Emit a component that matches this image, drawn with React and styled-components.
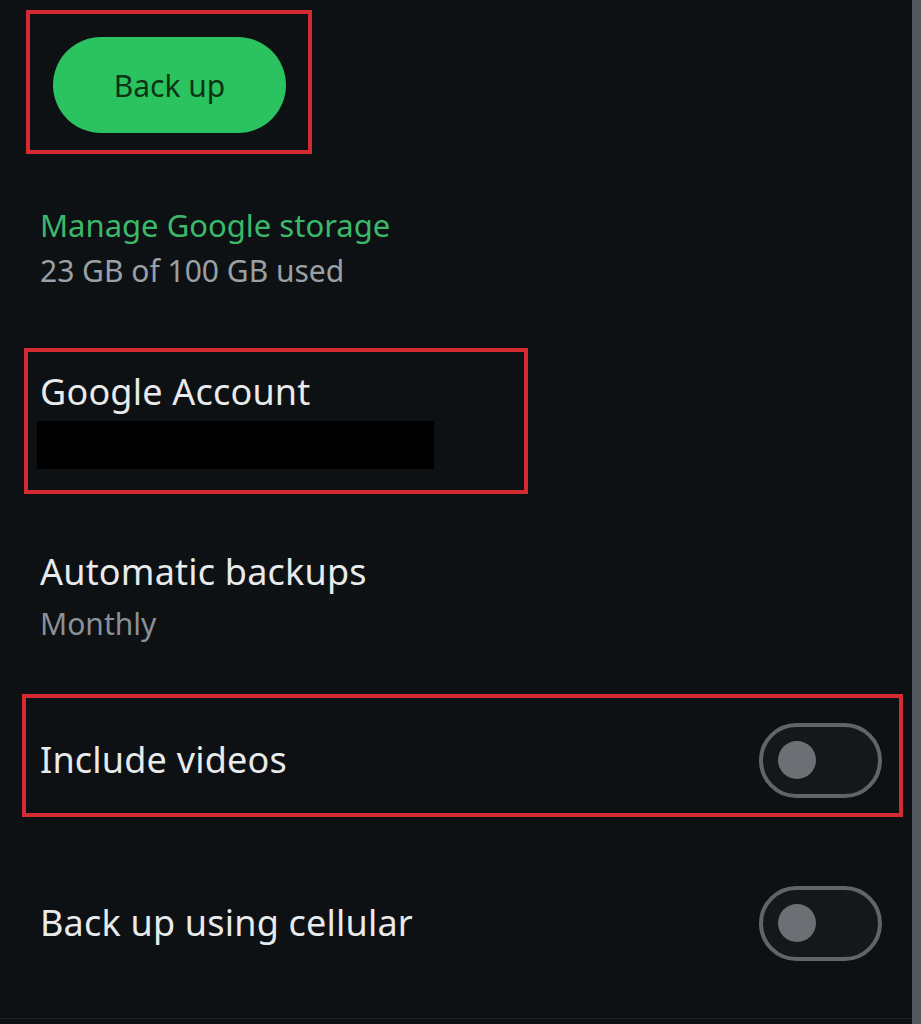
import React from "react";
import styled, {createGlobalStyle} from "styled-components";

const GlobalStyle = createGlobalStyle`
  html, body {
    margin: 0;
    padding: 0;
    background: #0d1114;
  }
  body {
    font-family: "Noto Sans", "Open Sans", sans-serif;
  }
`

const Screen = styled.div`
  display: flex;
  width: 921px;
  height: 1024px;
  overflow: hidden;
  background: #0d1114;
`

const Content = styled.div`
  flex: 1;
  display: flex;
  flex-direction: column;
  height: 1018px;
  border-bottom: 1px solid #1d2327;
`

const ScrollStrip = styled.div`
  width: 9px;
  background: #50585c;
`

const Highlight = styled.div`
  box-sizing: border-box;
  width: ${props => props.$width}px;
  height: ${props => props.$height}px;
  margin-left: ${props => props.$left}px;
  margin-top: ${props => props.$top}px;
  border: 4px solid #d42a32;
  padding: ${props => props.$pad};
`

const BackupButton = styled.button`
  width: 233px;
  height: 96px;
  border: none;
  border-radius: 48px;
  background: #2bc35f;
  color: #0b3314;
  font-family: "Noto Sans", sans-serif;
  font-size: 30px;
  padding: 0;
  cursor: pointer;
`

const Block = styled.div`
  display: flex;
  flex-direction: column;
  padding-left: 40px;
  margin-top: ${props => props.$top || 0}px;
`

const Title = styled.div`
  font-size: 36px;
  line-height: 48px;
  color: #e8eaeb;
  letter-spacing: 0.2px;
`

const Link = styled.div`
  font-size: 31px;
  line-height: 45px;
  color: #3cb86a;
`

const Sub = styled.div`
  font-size: 30px;
  line-height: ${props => props.$lh || 45}px;
  color: ${props => props.$color || "#9aa0a4"};
  margin-top: ${props => props.$gap || 0}px;
`

const Redacted = styled.div`
  width: 397px;
  height: 48px;
  margin: 5px 0 0 -3px;
  background: #000;
`

const Row = styled.div`
  display: flex;
  align-items: center;
  justify-content: space-between;
  height: ${props => props.$height}px;
  padding: ${props => props.$pad};
  margin-top: ${props => props.$top || 0}px;
  box-sizing: border-box;
`

const Track = styled.div`
  box-sizing: border-box;
  width: 123px;
  height: 75px;
  border: 4px solid #5f6569;
  border-radius: 38px;
  background: #14181b;
  display: flex;
  align-items: center;
  padding-left: 15px;
`

const Knob = styled.div`
  width: 38px;
  height: 38px;
  border-radius: 50%;
  background: #6c7075;
`

const Toggle = () => (
    <Track>
        <Knob/>
    </Track>
)

export default function App() {
    return (
        <Screen>
            <GlobalStyle/>
            <Content>
                <Highlight $width={286} $height={144} $left={26} $top={10} $pad="23px 0 0 23px">
                    <BackupButton>Back up</BackupButton>
                </Highlight>

                <Block $top={49}>
                    <Link>Manage Google storage</Link>
                    <Sub>23 GB of 100 GB used</Sub>
                </Block>

                <Highlight $width={504} $height={146} $left={24} $top={55} $pad="16px 0 0 12px">
                    <Title>Google Account</Title>
                    <Redacted/>
                </Highlight>

                <Block $top={54}>
                    <Title>Automatic backups</Title>
                    <Sub $lh={44} $gap={6} $color="#8a9094">Monthly</Sub>
                </Block>

                <Highlight $width={881} $height={123} $left={22} $top={48} $pad="0">
                    <Row $height={115} $pad="9px 17px 0 14px">
                        <Title>Include videos</Title>
                        <Toggle/>
                    </Row>
                </Highlight>

                <Row $height={124} $top={44} $pad="0 30px 0 40px">
                    <Title>Back up using cellular</Title>
                    <Toggle/>
                </Row>
            </Content>
            <ScrollStrip/>
        </Screen>
    )
}
